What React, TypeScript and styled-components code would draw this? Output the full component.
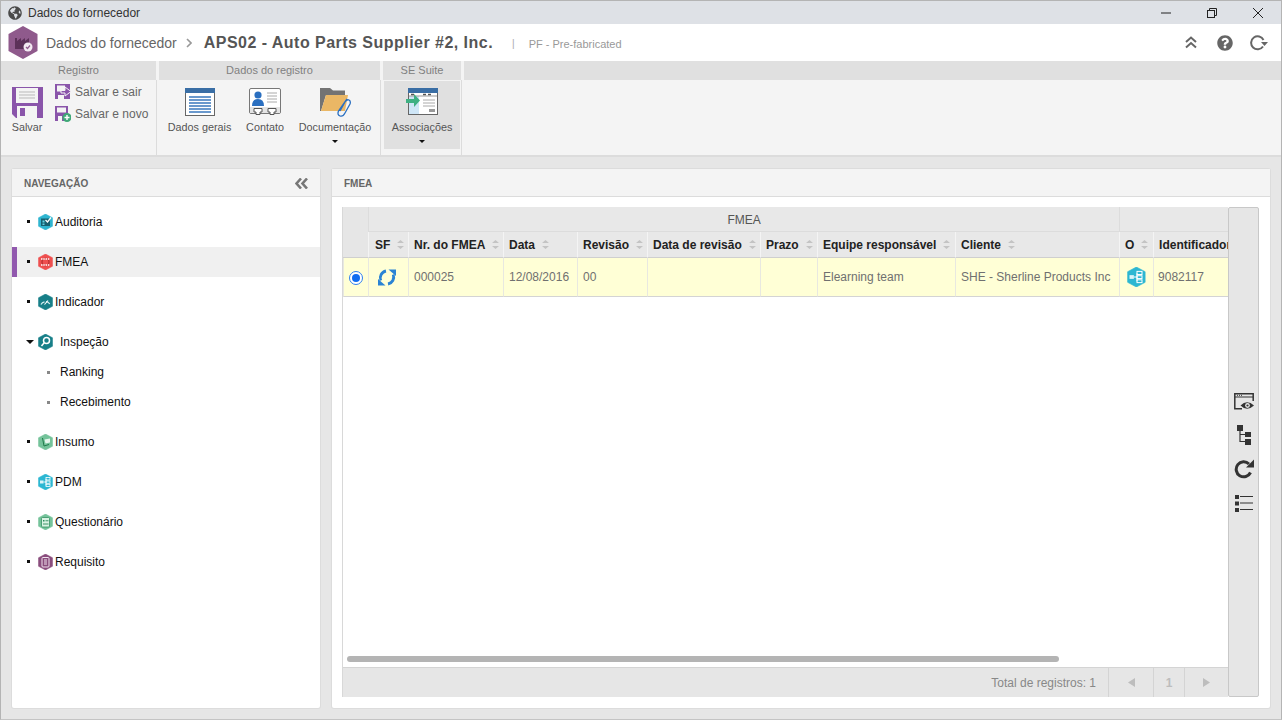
import React from 'react';
import styled, { createGlobalStyle } from 'styled-components';
import { FaGlobeAmericas, FaQuestionCircle } from 'react-icons/fa';

const GlobalStyle = createGlobalStyle`
    html, body {
        margin: 0;
        padding: 0;
        background: #e6e6e6;
    }
    * {
        box-sizing: border-box;
    }
`

const Window = styled.div`
    width: 1282px;
    height: 720px;
    display: flex;
    flex-direction: column;
    overflow: hidden;
    font-family: "Liberation Sans", Arial, sans-serif;
    font-size: 12px;
    background: #e6e6e6;
    border: 1px solid #b4b4b4;
    border-bottom-color: #c4c4c4;
`

const TitleBar = styled.div`
    height: 23px;
    flex: none;
    display: flex;
    align-items: center;
    background: #dee1e6;
    padding-left: 7px;
    color: #333;
    svg { color: #4a4a4a; }
`

const TitleText = styled.span`
    margin-left: 6px;
    flex: 1;
`

const WindowButton = styled.div`
    width: 46px;
    height: 23px;
    display: flex;
    align-items: center;
    justify-content: center;
    svg { color: #222; }
`

const Header = styled.div`
    height: 37px;
    flex: none;
    display: flex;
    align-items: center;
    background: #fff;
    padding: 0 13px 0 7px;
`

const Crumb = styled.span`
    margin-left: 8px;
    font-size: 14px;
    color: #666;
`

const CrumbArrow = styled.svg`
    margin: 0 12px 0 9px;
`

const RecordTitle = styled.span`
    font-size: 16px;
    font-weight: bold;
    letter-spacing: 0.47px;
    color: #555;
`

const RecordSep = styled.span`
    margin-left: 19px;
    margin-top: 2px;
    color: #aaa;
    font-size: 10px;
`

const RecordType = styled.span`
    margin-left: 14px;
    margin-top: 2px;
    color: #999;
    font-size: 11px;
    flex: 1;
`

const HeaderAction = styled.div`
    margin-left: 16px;
    width: 18px;
    height: 18px;
    display: flex;
    align-items: center;
    justify-content: center;
    color: #666;
`

const Ribbon = styled.div`
    height: 96px;
    flex: none;
    display: flex;
    gap: 3px;
    background: #f4f4f4;
    border-bottom: 2px solid #dcdcdc;
`

const RibbonGroup = styled.div<{ $width?: number }>`
    width: ${p => p.$width ? `${p.$width}px` : 'auto'};
    flex: ${p => p.$width ? 'none' : 1};
    display: flex;
    flex-direction: column;
`

const RibbonHeader = styled.div`
    height: 19px;
    flex: none;
    background: #e0e0e0;
    color: #808080;
    font-size: 11px;
    text-align: center;
    line-height: 19px;
`

const RibbonBody = styled.div<{ $last?: boolean }>`
    flex: 1;
    display: flex;
    padding-left: 1px;
    position: relative;
    &::after {
        content: '';
        display: ${p => p.$last ? 'none' : 'block'};
        position: absolute;
        top: 0;
        bottom: 0;
        right: -1px;
        width: 1px;
        background: #dcdcdc;
    }
`

const BigButton = styled.div<{ $width: number; $active?: boolean }>`
    width: ${p => p.$width}px;
    height: 68px;
    display: flex;
    flex-direction: column;
    align-items: center;
    padding-top: 5px;
    color: #555;
    font-size: 10.8px;
    background: ${p => p.$active ? '#e0e0e0' : 'transparent'};
    margin-top: 1px;
`

const BigIcon = styled.div`
    height: 32px;
    display: flex;
    align-items: center;
    justify-content: center;
    margin-bottom: 3px;
`

const DropArrow = styled.div`
    width: 0;
    height: 0;
    margin-top: 7px;
    border-left: 3px solid transparent;
    border-right: 3px solid transparent;
    border-top: 3px solid #111;
`

const SmallStack = styled.div`
    display: flex;
    flex-direction: column;
    gap: 3px;
    padding-top: 2px;
    margin-left: 3px;
`

const SmallButton = styled.div`
    height: 19px;
    display: flex;
    align-items: center;
    gap: 4px;
    color: #666;
    font-size: 12px;
`

const Main = styled.div`
    flex: 1;
    min-height: 0;
    display: flex;
    gap: 12px;
    padding: 12px 11px 11px 11px;
`

const Panel = styled.div<{ $width?: number }>`
    width: ${p => p.$width ? `${p.$width}px` : 'auto'};
    flex: ${p => p.$width ? 'none' : 1};
    min-width: 0;
    display: flex;
    flex-direction: column;
    background: #fff;
    border-radius: 2px;
    box-shadow: 0 0 0 1px #dcdcdc;
`

const PanelHeader = styled.div`
    height: 28px;
    flex: none;
    display: flex;
    align-items: center;
    justify-content: space-between;
    padding: 1px 12px 0;
    background: #f4f4f4;
    border-bottom: 1px solid #dcdcdc;
    color: #666;
    font-size: 10px;
    font-weight: bold;
`

const NavList = styled.div`
    padding-top: 10px;
    display: flex;
    flex-direction: column;
`

const NavRow = styled.div<{ $selected?: boolean; $gap?: boolean }>`
    height: 30px;
    flex: none;
    display: flex;
    align-items: center;
    margin-bottom: ${p => p.$gap ? '10px' : 0};
    padding-left: ${p => p.$selected ? '10px' : '15px'};
    background: ${p => p.$selected ? '#f0f0f0' : 'transparent'};
    border-left: ${p => p.$selected ? '5px solid #9159ae' : 'none'};
    color: #111;
`

const Bullet = styled.span`
    width: 3px;
    height: 3px;
    background: #111;
    margin-right: 8px;
    position: relative;
    top: -1px;
`

const OpenArrow = styled.span`
    width: 0;
    height: 0;
    margin-left: -1px;
    margin-right: 4px;
    border-left: 4px solid transparent;
    border-right: 4px solid transparent;
    border-top: 4px solid #111;
`

const NavLabel = styled.span<{ $indent?: boolean }>`
    margin-left: ${p => p.$indent ? '7px' : '2px'};
`

const SubRow = styled.div<{ $gap?: boolean }>`
    height: 30px;
    flex: none;
    display: flex;
    align-items: center;
    padding-left: 35px;
    margin-bottom: ${p => p.$gap ? '10px' : 0};
    color: #111;
`

const SubBullet = styled.span`
    width: 3px;
    height: 3px;
    background: #888;
    margin-right: 10px;
`

const PanelBody = styled.div`
    flex: 1;
    min-height: 0;
    display: flex;
    padding: 10px 11px 11px 10px;
`

const GridArea = styled.div`
    width: 886px;
    flex: none;
    display: flex;
    flex-direction: column;
    border-left: 1px solid #d8d8d8;
`

const GridBody = styled.div`
    flex: 1;
    min-height: 0;
    overflow: hidden;
    display: flex;
    flex-direction: column;
`

const Table = styled.table`
    width: 885px;
    border-collapse: separate;
    border-spacing: 0;
    table-layout: fixed;
`

const GroupCell = styled.th`
    height: 25px;
    background: #e8e8e8;
    color: #555;
    font-size: 12px;
    font-weight: normal;
    border-left: 1px solid #dcdcdc;
    border-bottom: 1px solid #dcdcdc;
    padding: 1px 0 0;
`

const RadioHead = styled.th`
    background: #e6e6e6;
    border-bottom: 1px solid #cfcfcf;
    padding: 0;
`

const HeadCell = styled.th`
    height: 26px;
    background: #e8e8e8;
    color: #222;
    font-size: 12px;
    font-weight: bold;
    text-align: left;
    white-space: nowrap;
    overflow: hidden;
    padding: 0 0 0 5px;
    border-left: 1px solid #f4f4f4;
    border-bottom: 1px solid #cfcfcf;
    &:first-child { padding-left: 6px; }
`

const HeadInner = styled.div`
    display: flex;
    align-items: center;
`

const SortIcon = styled.svg`
    flex: none;
    margin-left: 7px;
`

const Cell = styled.td<{ $center?: boolean }>`
    height: 39px;
    background: #ffffd6;
    color: #707070;
    font-size: 12px;
    white-space: nowrap;
    overflow: hidden;
    padding: ${p => p.$center ? 0 : '0 0 0 5px'};
    text-align: ${p => p.$center ? 'center' : 'left'};
    border-left: 1px solid #e8e8e0;
    border-bottom: 1px solid #d4d4d4;
    &:last-child { padding-left: 4px; }
    svg { display: block; margin: 0 auto; }
`

const Radio = styled.span`
    display: block;
    width: 14px;
    height: 14px;
    margin: 1px auto 0;
    border-radius: 50%;
    border: 1px solid #2f80ed;
    background: #fff;
    position: relative;
    &::after {
        content: '';
        position: absolute;
        inset: 2px;
        border-radius: 50%;
        background: #0f6cf0;
    }
`

const ScrollSpace = styled.div`
    flex: 1;
`

const ScrollBar = styled.div`
    width: 712px;
    height: 6px;
    margin: 0 0 5px 4px;
    border-radius: 3px;
    background: #b4b4b4;
`

const Footer = styled.div`
    height: 30px;
    flex: none;
    display: flex;
    align-items: center;
    justify-content: flex-end;
    background: #e6e6e6;
    border-top: 1px solid #d4d4d4;
    color: #888;
`

const TotalText = styled.span`
    margin-right: 12px;
`

const PageButton = styled.div<{ $width: number }>`
    width: ${p => p.$width}px;
    height: 100%;
    display: flex;
    align-items: center;
    justify-content: center;
    border-left: 1px solid #d4d4d4;
    color: #bdbdbd;
    font-weight: bold;
`

const SideBar = styled.div`
    width: 31px;
    flex: none;
    display: flex;
    flex-direction: column;
    align-items: center;
    justify-content: center;
    gap: 12px;
    background: #e6e6e6;
    border: 1px solid #c8c8c8;
    border-radius: 2px;
`

const SideIcon = styled.div`
    width: 22px;
    height: 22px;
    display: flex;
    align-items: center;
    justify-content: center;
`

const Hexagon = ({ color, children, size = 16 }: { color: string, children?: React.ReactNode, size?: number }) => (
    <svg width={size * 15 / 16} height={size} viewBox="0 0 30 32">
        <path d="M15 0 L29 7.5 V24.5 L15 32 L1 24.5 V7.5 Z" fill={color} stroke={color} strokeWidth="1" strokeLinejoin="round" />
        {children}
    </svg>
);

function PdmHex({ size }: { size: number }) {
    return (
        <Hexagon color="#2cb7d2" size={size}>
            <rect x="4" y="13" width="7" height="6" fill="#d9f3f8" />
            <path d="M11 16 H16 M16 10 V23" stroke="#fff" strokeWidth="1.6" />
            <rect x="16" y="7" width="8" height="5" fill="none" stroke="#fff" strokeWidth="1.6" />
            <rect x="16" y="14" width="8" height="4.5" fill="none" stroke="#fff" strokeWidth="1.6" />
            <rect x="16" y="20.5" width="8" height="4.5" fill="none" stroke="#fff" strokeWidth="1.6" />
        </Hexagon>
    );
}

const navIcons: Record<string, React.ReactNode> = {
    Auditoria: <Hexagon color="#2fb5d0">
        <rect x="6" y="9" width="18" height="15" fill="#17606f" />
        <rect x="9" y="13" width="4" height="4" fill="#5fd0e4" />
        <rect x="9" y="19" width="4" height="3" fill="#5fd0e4" />
        <path d="M15 12 L19 16 L26 7" stroke="#fff" strokeWidth="2.5" fill="none" />
    </Hexagon>,
    FMEA: <Hexagon color="#ee4f4f">
        <circle cx="15" cy="16" r="7" fill="none" stroke="#b82f2f" strokeWidth="2.5" />
        <path d="M6 10 H24 M6 22 H24" stroke="#fbd0d0" strokeWidth="4" strokeDasharray="3 1.5" />
    </Hexagon>,
    Indicador: <Hexagon color="#177f88">
        <path d="M6 21 A10 10 0 0 1 24 21" fill="none" stroke="#d8eef0" strokeWidth="2.5" strokeDasharray="9 3" />
        <path d="M13 21 L20 13" stroke="#fff" strokeWidth="2.2" />
    </Hexagon>,
    Inspeção: <Hexagon color="#177f88">
        <circle cx="17" cy="13" r="6" fill="none" stroke="#fff" strokeWidth="3" />
        <path d="M12 18 L7 24" stroke="#fff" strokeWidth="3" />
    </Hexagon>,
    Insumo: <Hexagon color="#74c39a">
        <path d="M9 8 L12 24 L22 21" fill="none" stroke="#1f7a4a" strokeWidth="2" />
        <path d="M13 11 L24 9 L24 17 L15 19 Z" fill="#e6f6ec" />
    </Hexagon>,
    PDM: <PdmHex size={16} />,
    Questionário: <Hexagon color="#74c39a">
        <rect x="7" y="7" width="16" height="19" rx="2" fill="#d9f2e3" stroke="#2e8b5c" strokeWidth="1.5" />
        <rect x="10" y="12" width="3" height="3" fill="#2e8b5c" />
        <path d="M15 13.5 H21 M10 20 H21" stroke="#2e8b5c" strokeWidth="1.8" />
    </Hexagon>,
    Requisito: <Hexagon color="#8a4d7d">
        <rect x="8" y="7" width="14" height="19" rx="2" fill="none" stroke="#f1e2ee" strokeWidth="2" />
        <path d="M12 12 H18 M12 16 H18 M12 20 H18" stroke="#f1e2ee" strokeWidth="2" />
    </Hexagon>,
};

const Sort = () => (
    <SortIcon width="7" height="9" viewBox="0 0 7 9">
        <path d="M3.5 0 L7 3 H0 Z M0 6 H7 L3.5 9 Z" fill="#c4c4c4" />
    </SortIcon>
);

const columns = [
    { name: 'SF', width: 40 },
    { name: 'Nr. do FMEA', width: 95 },
    { name: 'Data', width: 74 },
    { name: 'Revisão', width: 70 },
    { name: 'Data de revisão', width: 113 },
    { name: 'Prazo', width: 57 },
    { name: 'Equipe responsável', width: 138 },
    { name: 'Cliente', width: 164 },
    { name: 'O', width: 34 },
    { name: 'Identificador', width: 75 },
];

const SyncIcon = () => (
    <svg width="21" height="17" viewBox="0 0 21 17">
        <path d="M8 2 A7 7 0 0 0 2.8 11.5" fill="none" stroke="#2a83d4" strokeWidth="2.8" />
        <path d="M0 10 V16.5 H7.5 Z" fill="#2a83d4" />
        <path d="M10 15 A7 7 0 0 0 15.2 5.5" fill="none" stroke="#2a83d4" strokeWidth="2.8" />
        <path d="M18 7 V0.5 H10.5 Z" fill="#2a83d4" />
    </svg>
);

const SaveIcon = () => (
    <svg width="31" height="31" viewBox="0 0 31 31">
        <path d="M0 0 H31 V31 H4 L0 27 Z" fill="#8a55aa" />
        <rect x="4" y="1" width="22" height="15" fill="#f4f4f4" />
        <path d="M7 5 H23 M7 8 H23 M7 11 H23" stroke="#b9b9b9" strokeWidth="1" />
        <rect x="5" y="19" width="20" height="12" fill="#f4f4f4" />
        <rect x="8" y="21" width="5" height="8" fill="#8a55aa" />
    </svg>
);

const SaveExitIcon = () => (
    <svg width="16" height="15" viewBox="0 0 16 15">
        <path d="M0 0 H15 V15 H0 Z" fill="#8a55aa" />
        <rect x="2" y="1.5" width="8" height="6" fill="#f4f4f4" />
        <rect x="3" y="11" width="6" height="4" fill="#f4f4f4" />
        <path d="M6 6.5 H10 V3 L16 7.5 L10 12 V9 H6 Z" fill="#8a55aa" stroke="#f4f4f4" strokeWidth="1" />
    </svg>
);

const SaveNewIcon = () => (
    <svg width="16" height="16" viewBox="0 0 16 16">
        <path d="M0 0 H13 V15 H0 Z" fill="#8a55aa" />
        <rect x="2" y="1.5" width="9" height="5" fill="#f4f4f4" />
        <rect x="3" y="10" width="4" height="5" fill="#f4f4f4" />
        <circle cx="12" cy="11.5" r="4.5" fill="#3fa877" />
        <path d="M12 9 V14 M9.5 11.5 H14.5" stroke="#fff" strokeWidth="1.4" />
    </svg>
);

const GeneralIcon = () => (
    <svg width="30" height="28" viewBox="0 0 30 28">
        <rect x="0.5" y="0.5" width="29" height="27" fill="#fff" stroke="#666" />
        <rect x="0" y="0" width="30" height="5" fill="#3a6ea5" />
        <path d="M4 9 H26 M4 12 H26 M4 15 H26 M4 18 H26 M4 21 H26 M4 24 H26" stroke="#3a78bd" strokeWidth="1.3" />
    </svg>
);

const ContactIcon = () => (
    <svg width="32" height="28" viewBox="0 0 32 28">
        <rect x="0.5" y="0.5" width="31" height="25" rx="1.5" fill="#fff" stroke="#777" />
        <circle cx="9" cy="7" r="3.6" fill="#2a6fc0" />
        <path d="M3 18 Q3 11 9 11 Q15 11 15 18 Z" fill="#2a6fc0" />
        <path d="M18 5 H28 M18 8 H28 M18 11 H28 M18 14 H28" stroke="#aaa" strokeWidth="1" />
        <rect x="1" y="19" width="30" height="6" fill="#e4e4e4" />
        <path d="M5 20.5 H13 V24 H11 V26.5 H7 V24 H5 Z M19 20.5 H27 V24 H25 V26.5 H21 V24 H19 Z" fill="#fff" stroke="#555" />
    </svg>
);

const FolderIcon = () => (
    <svg width="31" height="30" viewBox="0 0 31 30">
        <path d="M0 1 H10 L13 3.5 H25 V8 H6 L1 24 H0 Z" fill="#737373" />
        <path d="M6 8 H28 L25 24 H1 Z" fill="#eab765" />
        <path d="M27 12 L18.5 24 Q17 28 20 29 Q23 30 25 26 L30 17 Q31 14 29 13 Q27 12 25 15 L20 24" fill="none" stroke="#2a6fc0" strokeWidth="1.3" />
    </svg>
);

const AssocIcon = () => (
    <svg width="32" height="28" viewBox="0 0 32 28">
        <rect x="2.5" y="0.5" width="29" height="26" fill="#fff" stroke="#666" />
        <rect x="2" y="0" width="30" height="5" fill="#3a6ea5" />
        <rect x="3" y="8" width="10" height="18" fill="#cfe6f7" />
        <path d="M3 8 H31" stroke="#999" strokeWidth="1" />
        <path d="M5 6.5 H8 M17 6.5 H20 M22 6.5 H25" stroke="#555" strokeWidth="1.4" />
        <path d="M17 12 H29 M17 15 H29 M17 18 H29" stroke="#aaa" strokeWidth="1" />
        <rect x="23" y="21" width="6" height="3" fill="#999" />
        <path d="M0 11 H8 V6 L14 12.5 L8 19 V15 H0 Z" fill="#3fb083" />
    </svg>
);

const TitleHex = () => (
    <svg width="30" height="33" viewBox="0 0 30 33">
        <path d="M15 0 L29.5 8 V25 L15 33 L0.5 25 V8 Z" fill="#8f5a8c" />
        <path d="M7 23 V12 H9 V15 L13 12 V15 L17 12 V15 L21 12 V17 H23 V23 Z" fill="#5c3159" />
        <circle cx="20" cy="21" r="4.5" fill="#f3eaf2" />
        <path d="M18 21 L19.5 22.5 L22 19.5" stroke="#8f5a8c" strokeWidth="1.2" fill="none" />
    </svg>
);

export default function App() {
    return <Window>
        <GlobalStyle />
        <TitleBar>
            <FaGlobeAmericas size={14} />
            <TitleText>Dados do fornecedor</TitleText>
            <WindowButton>
                <svg width="12" height="12" viewBox="0 0 12 12"><path d="M1 6 H11" stroke="currentColor" strokeWidth="1" /></svg>
            </WindowButton>
            <WindowButton>
                <svg width="12" height="12" viewBox="0 0 12 12" fill="none" stroke="currentColor"><rect x="1.5" y="3.5" width="7" height="7" /><path d="M3.5 3.5 V1.5 H10.5 V8.5 H8.5" /></svg>
            </WindowButton>
            <WindowButton>
                <svg width="12" height="12" viewBox="0 0 12 12"><path d="M1 1 L11 11 M11 1 L1 11" stroke="currentColor" strokeWidth="1" /></svg>
            </WindowButton>
        </TitleBar>
        <Header>
            <TitleHex />
            <Crumb>Dados do fornecedor</Crumb>
            <CrumbArrow width="6" height="10" viewBox="0 0 6 10"><path d="M1 1 L5 5 L1 9" fill="none" stroke="#999" strokeWidth="1.6" /></CrumbArrow>
            <RecordTitle>APS02 - Auto Parts Supplier #2, Inc.</RecordTitle>
            <RecordSep>|</RecordSep>
            <RecordType>PF - Pre-fabricated</RecordType>
            <HeaderAction>
                <svg width="12" height="13" viewBox="0 0 12 13" fill="none" stroke="#666" strokeWidth="2"><path d="M1 6 L6 1.5 L11 6 M1 11.5 L6 7 L11 11.5" /></svg>
            </HeaderAction>
            <HeaderAction><FaQuestionCircle size={16} /></HeaderAction>
            <HeaderAction>
                <svg width="18" height="16" viewBox="0 0 18 16" fill="none"><path d="M13 11.5 A6.5 6.5 0 1 1 13.5 5" stroke="#666" strokeWidth="2" /><path d="M11 7 H18 L14.5 11 Z" fill="#666" /></svg>
            </HeaderAction>
        </Header>
        <Ribbon>
            <RibbonGroup $width={155}>
                <RibbonHeader>Registro</RibbonHeader>
                <RibbonBody>
                    <BigButton $width={50}>
                        <BigIcon><SaveIcon /></BigIcon>
                        Salvar
                    </BigButton>
                    <SmallStack>
                        <SmallButton><SaveExitIcon />Salvar e sair</SmallButton>
                        <SmallButton><SaveNewIcon />Salvar e novo</SmallButton>
                    </SmallStack>
                </RibbonBody>
            </RibbonGroup>
            <RibbonGroup $width={221}>
                <RibbonHeader>Dados do registro</RibbonHeader>
                <RibbonBody>
                    <BigButton $width={79}>
                        <BigIcon><GeneralIcon /></BigIcon>
                        Dados gerais
                    </BigButton>
                    <BigButton $width={52}>
                        <BigIcon><ContactIcon /></BigIcon>
                        Contato
                    </BigButton>
                    <BigButton $width={88}>
                        <BigIcon><FolderIcon /></BigIcon>
                        Documentação
                        <DropArrow />
                    </BigButton>
                </RibbonBody>
            </RibbonGroup>
            <RibbonGroup $width={78}>
                <RibbonHeader>SE Suite</RibbonHeader>
                <RibbonBody>
                    <BigButton $width={76} $active>
                        <BigIcon><AssocIcon /></BigIcon>
                        Associações
                        <DropArrow />
                    </BigButton>
                </RibbonBody>
            </RibbonGroup>
            <RibbonGroup>
                <RibbonHeader />
                <RibbonBody $last />
            </RibbonGroup>
        </Ribbon>
        <Main>
            <Panel $width={308}>
                <PanelHeader>
                    NAVEGAÇÃO
                    <svg width="13" height="11" viewBox="0 0 13 11" fill="none" stroke="#777" strokeWidth="2.6"><path d="M6 0.5 L1.5 5.5 L6 10.5 M12 0.5 L7.5 5.5 L12 10.5" /></svg>
                </PanelHeader>
                <NavList>
                    <NavRow $gap><Bullet />{navIcons['Auditoria']}<NavLabel>Auditoria</NavLabel></NavRow>
                    <NavRow $gap $selected><Bullet />{navIcons['FMEA']}<NavLabel>FMEA</NavLabel></NavRow>
                    <NavRow $gap><Bullet />{navIcons['Indicador']}<NavLabel>Indicador</NavLabel></NavRow>
                    <NavRow><OpenArrow />{navIcons['Inspeção']}<NavLabel $indent>Inspeção</NavLabel></NavRow>
                    <SubRow><SubBullet />Ranking</SubRow>
                    <SubRow $gap><SubBullet />Recebimento</SubRow>
                    <NavRow $gap><Bullet />{navIcons['Insumo']}<NavLabel>Insumo</NavLabel></NavRow>
                    <NavRow $gap><Bullet />{navIcons['PDM']}<NavLabel>PDM</NavLabel></NavRow>
                    <NavRow $gap><Bullet />{navIcons['Questionário']}<NavLabel>Questionário</NavLabel></NavRow>
                    <NavRow $gap><Bullet />{navIcons['Requisito']}<NavLabel>Requisito</NavLabel></NavRow>
                </NavList>
            </Panel>
            <Panel>
                <PanelHeader>FMEA</PanelHeader>
                <PanelBody>
                    <GridArea>
                        <GridBody>
                            <Table>
                                <colgroup>
                                    <col style={{ width: 25 }} />
                                    {columns.map(c => <col key={c.name} style={{ width: c.width }} />)}
                                </colgroup>
                                <thead>
                                    <tr>
                                        <RadioHead rowSpan={2} />
                                        <GroupCell colSpan={8}>FMEA</GroupCell>
                                        <GroupCell colSpan={2} />
                                    </tr>
                                    <tr>
                                        {columns.map(c => <HeadCell key={c.name}>
                                            <HeadInner>{c.name}{c.name !== 'Identificador' && <Sort />}</HeadInner>
                                        </HeadCell>)}
                                    </tr>
                                </thead>
                                <tbody>
                                    <tr>
                                        <Cell $center><Radio /></Cell>
                                        <Cell $center><SyncIcon /></Cell>
                                        <Cell>000025</Cell>
                                        <Cell>12/08/2016</Cell>
                                        <Cell>00</Cell>
                                        <Cell />
                                        <Cell />
                                        <Cell>Elearning team</Cell>
                                        <Cell>SHE - Sherline Products Inc</Cell>
                                        <Cell $center><PdmHex size={20} /></Cell>
                                        <Cell>9082117</Cell>
                                    </tr>
                                </tbody>
                            </Table>
                            <ScrollSpace />
                            <ScrollBar />
                        </GridBody>
                        <Footer>
                            <TotalText>Total de registros: 1</TotalText>
                            <PageButton $width={45}>
                                <svg width="7" height="9" viewBox="0 0 7 9"><path d="M7 0 V9 L0 4.5 Z" fill="#bdbdbd" /></svg>
                            </PageButton>
                            <PageButton $width={31}>1</PageButton>
                            <PageButton $width={44}>
                                <svg width="7" height="9" viewBox="0 0 7 9"><path d="M0 0 V9 L7 4.5 Z" fill="#bdbdbd" /></svg>
                            </PageButton>
                        </Footer>
                    </GridArea>
                    <SideBar>
                        <SideIcon>
                            <svg width="20" height="17" viewBox="0 0 20 17" fill="none"><path d="M8 15.7 H0.8 V0.8 H19.2 V8" stroke="#333" strokeWidth="1.5" /><path d="M1 4 H19" stroke="#333" strokeWidth="1" /><path d="M3 2.3 H4 M5 2.3 H6 M7 2.3 H8" stroke="#333" /><path d="M6.5 12.5 Q13 6 20 12.5 Q13 19 6.5 12.5 Z" fill="#333" /><circle cx="13.5" cy="12.5" r="2.4" fill="#e6e6e6" /><circle cx="13.5" cy="12.5" r="1.1" fill="#333" /></svg>
                        </SideIcon>
                        <SideIcon>
                            <svg width="14" height="20" viewBox="0 0 14 20" fill="#333"><rect x="0" y="0" width="6" height="6" /><rect x="8" y="7" width="6" height="5" /><rect x="8" y="14" width="6" height="6" /><path d="M3 6 V16.5 H8 M3 9.5 H8" stroke="#333" strokeWidth="1.2" fill="none" /></svg>
                        </SideIcon>
                        <SideIcon>
                            <svg width="20" height="20" viewBox="0 0 20 20" fill="none"><path d="M16.5 13.5 A7.5 7.5 0 1 1 15 5" stroke="#333" strokeWidth="3" /><path d="M12 8.5 H20 V0.5 Z" fill="#333" /></svg>
                        </SideIcon>
                        <SideIcon>
                            <svg width="18" height="17" viewBox="0 0 18 17" fill="#333"><rect x="0" y="0" width="4" height="4" /><rect x="0" y="6.5" width="4" height="4" /><rect x="0" y="13" width="4" height="4" /><rect x="5" y="1" width="13" height="1" /><rect x="5" y="7.5" width="13" height="1" /><rect x="5" y="14" width="13" height="1" /></svg>
                        </SideIcon>
                    </SideBar>
                </PanelBody>
            </Panel>
        </Main>
    </Window>
}
